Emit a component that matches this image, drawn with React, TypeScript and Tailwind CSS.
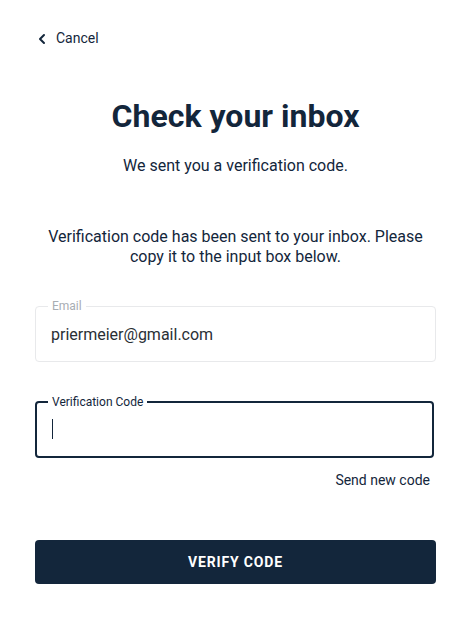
import { ChevronLeft } from "lucide-react";

export default function App() {
  return (
    <div className="min-h-[628px] w-full bg-white text-[#13263b] font-['Roboto',sans-serif]">
      <div className="px-[35px] pt-[28px]">
        <button className="flex items-center gap-[6px] text-[14px] text-[#13263b]">
          <ChevronLeft size={16} strokeWidth={3} className="-ml-[1px]" />
          Cancel
        </button>

        <h1 className="mt-[48px] text-center text-[32px] font-bold leading-[38px]">Check your inbox</h1>
        <p className="mt-[21px] text-center text-[16px] leading-[20px]">We sent you a verification code.</p>

        <p className="mt-[51px] px-[10px] text-center text-[16px] leading-[20px]">
          Verification code has been sent to your inbox. Please copy it to the input box below.
        </p>

        <fieldset className="mt-[33px] h-[62px] rounded-[4px] border border-[#e8e9eb] pl-[12px] pr-[12px]">
          <legend className="px-[4px] text-[12px] leading-[12px] text-[#a8adb3]">Email</legend>
          <div className="pl-[3px] pt-[11px] text-[16px] text-[#2a2f35]">priermeier@gmail.com</div>
        </fieldset>

        <fieldset className="mt-[34px] h-[62px] w-[399px] rounded-[4px] border-2 border-[#13263b] px-[11px]">
          <legend className="px-[4px] text-[12px] leading-[12px] text-[#13263b]">Verification Code</legend>
          <div className="flex h-[42px] items-center pl-[4px]">
            <span className="block h-[20px] w-[1px] bg-[#13263b]" />
          </div>
        </fieldset>

        <div className="mt-[12px] flex justify-end pr-[6px]">
          <button className="text-[14px] text-[#13263b]">Send new code</button>
        </div>

        <button className="mt-[49px] h-[44px] w-full rounded-[4px] bg-[#13263b] text-[14px] font-bold tracking-[0.06em] text-white">
          VERIFY CODE
        </button>
      </div>
    </div>
  );
}
